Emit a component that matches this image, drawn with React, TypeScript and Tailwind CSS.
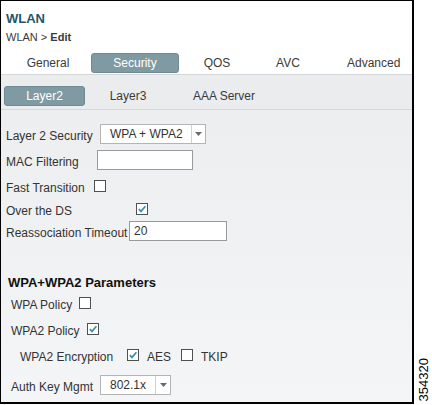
import React from "react";

const font = { fontFamily: '"Liberation Sans", Arial, sans-serif' };

function Check({ checked }: { checked?: boolean }) {
  return (
    <span className="flex h-[12px] w-[12px] shrink-0 items-center justify-center border border-[#505050] bg-white">
      {checked && (
        <svg width="10" height="10" viewBox="0 0 10 10">
          <path d="M1.8 5.2 L4 7.4 L8.4 2.2" fill="none" stroke="#3a8db3" strokeWidth="1.7" />
        </svg>
      )}
    </span>
  );
}

function Select({ value, width, textWidth }: { value: string; width: string; textWidth: string }) {
  return (
    <div className={`flex h-[20px] items-stretch border border-[#b4b4b4] bg-white ${width}`}>
      <span className={`flex items-center pl-[9px] text-[12px] text-[#333] ${textWidth}`}>{value}</span>
      <span className="flex flex-1 items-center justify-center border-l border-[#d0d0d0]">
        <svg width="7" height="4" viewBox="0 0 7 4">
          <path d="M0 0 H7 L3.5 4 Z" fill="#6a6a6a" />
        </svg>
      </span>
    </div>
  );
}

export default function App() {
  return (
    <div className="flex h-[405px] w-[432px] bg-white" style={font}>
      <div className="flex h-[404px] w-[414px] shrink-0 flex-col border-l border-t border-r-2 border-b-2 border-black text-[#333]">
        <div className="pl-[5px] pt-[10px] text-[13px] font-bold leading-[15px] text-[#24566b]">WLAN</div>
        <div className="mt-[5px] pl-[5px] text-[11px] leading-[13px] text-[#3a3a3a]">
          WLAN &gt; <span className="font-bold">Edit</span>
        </div>

        <div className="flex border-b border-[#d4d6d8] pb-[1px] pt-[9px] text-[12px] leading-[20px] text-[#3a3a3a]">
          <div className="w-[90px] pl-[4px] text-center">General</div>
          <div className="w-[88px] rounded-[3px] border border-[#6f8a93] bg-[#7f9aa3] text-center leading-[18px] text-white">
            Security
          </div>
          <div className="w-[76px] text-center">QOS</div>
          <div className="w-[66px] text-center">AVC</div>
          <div className="pl-[26px]">Advanced</div>
        </div>

        <div className="flex border-b border-[#d4d6d8] bg-[#eaecee] pb-[3px] pl-[3px] pt-[11px] text-[12px] leading-[20px] text-[#3a3a3a]">
          <div className="w-[81px] rounded-[3px] border border-[#6f8a93] bg-[#7f9aa3] text-center leading-[18px] text-white">
            Layer2
          </div>
          <div className="w-[86px] text-center">Layer3</div>
          <div className="pl-[22px]">AAA Server</div>
        </div>

        <div className="flex flex-1 flex-col bg-gradient-to-b from-[#eceef0] to-[#f4f5f6] text-[12px] leading-[14px]">
          <div className="mt-[14px] flex h-[20px] items-center pl-[5px]">
            <span className="w-[94px] pt-[4px]">Layer 2 Security</span>
            <Select value="WPA + WPA2" width="w-[106px]" textWidth="w-[90px]" />
          </div>
          <div className="mt-[6px] flex h-[20px] items-center pl-[5px]">
            <span className="w-[91px] pt-[4px]">MAC Filtering</span>
            <div className="h-[20px] w-[96px] border border-[#9a9a9a] bg-white" />
          </div>
          <div className="mt-[6px] flex h-[20px] items-center pl-[5px]">
            <span className="w-[88px] pt-[4px]">Fast Transition</span>
            <Check />
          </div>
          <div className="mt-[3px] flex h-[20px] items-center pl-[5px]">
            <span className="w-[130px] pt-[4px]">Over the DS</span>
            <Check checked />
          </div>
          <div className="mt-[2px] flex h-[20px] items-center pl-[5px]">
            <span className="w-[123px] pt-[4px]">Reassociation Timeout</span>
            <div className="flex h-[20px] w-[98px] items-center border border-[#9a9a9a] bg-white pl-[4px]">20</div>
          </div>

          <div className="mt-[34px] pl-[7px] text-[13px] font-bold leading-[16px] text-[#111]">WPA+WPA2 Parameters</div>
          <div className="mt-[2px] flex h-[20px] items-center pl-[10px]">
            <span className="w-[68px] pt-[4px]">WPA Policy</span>
            <Check />
          </div>
          <div className="mt-[6px] flex h-[20px] items-center pl-[10px]">
            <span className="w-[76px] pt-[4px]">WPA2 Policy</span>
            <Check checked />
          </div>
          <div className="mt-[6px] flex h-[20px] items-center pl-[19px]">
            <span className="w-[107px] pt-[4px]">WPA2 Encryption</span>
            <Check checked />
            <span className="ml-[8px] w-[34px] pt-[4px]">AES</span>
            <Check />
            <span className="ml-[8px] pt-[4px]">TKIP</span>
          </div>
          <div className="mt-[10px] flex h-[20px] items-center pl-[10px]">
            <span className="w-[89px] pt-[4px]">Auth Key Mgmt</span>
            <Select value="802.1x" width="w-[71px]" textWidth="w-[54px]" />
          </div>
        </div>
      </div>
      <div className="flex flex-1 items-end justify-center pb-[4px]">
        <span className="rotate-180 text-[13px] leading-[13px] text-black [writing-mode:vertical-rl]">354320</span>
      </div>
    </div>
  );
}
